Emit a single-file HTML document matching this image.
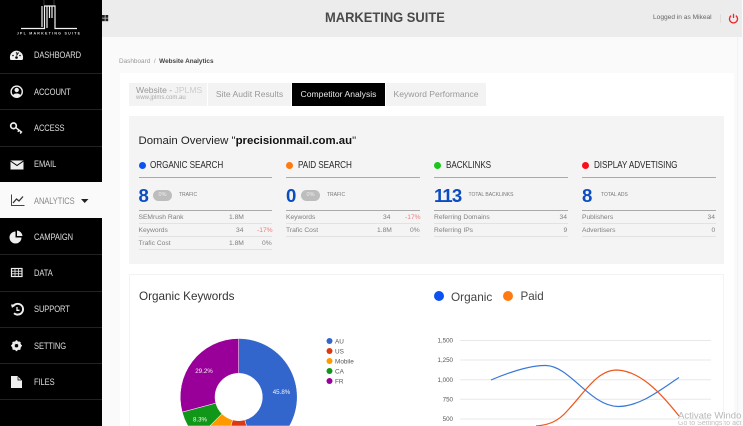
<!DOCTYPE html>
<html><head><meta charset="utf-8">
<style>
html,body{margin:0;padding:0;width:743px;height:426px;overflow:hidden;background:#fafafa;font-family:"Liberation Sans",sans-serif;}
#w{position:relative;width:743px;height:426px;overflow:hidden;}
.a{position:absolute;white-space:nowrap;}
#sb{position:absolute;left:0;top:0;width:101.5px;height:426px;background:#000;}
.sep{position:absolute;left:0;width:101.5px;height:1px;background:#222;}
.nav{position:absolute;left:33.5px;font-size:9.2px;line-height:12px;color:#dedede;letter-spacing:-.1px;transform:scaleX(.82);transform-origin:0 50%;white-space:nowrap;}
.h{font-size:10.2px;color:#2a2a2a;line-height:12px;letter-spacing:-.1px;transform:scaleX(.8);transform-origin:0 50%;}
.dot{position:absolute;width:7.4px;height:7.4px;border-radius:50%;}
.ln{position:absolute;height:1.6px;background:#aaa;}
.rl{position:absolute;height:1px;background:#e2e2e2;}
.big{position:absolute;font-weight:bold;font-size:18.6px;line-height:24px;color:#0b4cc0;}
.sm{position:absolute;font-size:5px;line-height:8px;color:#777;}
.t{position:absolute;font-size:6.7px;line-height:10px;color:#808080;}
.pill{position:absolute;width:19px;height:11px;border-radius:6px;background:#bdbdbd;color:#eee;font-size:5.5px;line-height:11px;text-align:center;}
.tab{position:absolute;top:83px;height:23px;background:#f3f3f3;color:#999;font-size:8.6px;line-height:23px;text-align:center;}
</style></head><body><div id="w">

<div class="a" style="left:101px;top:0;width:641px;height:37px;background:#ececec;"></div>
<div class="a" style="left:120px;top:73px;width:614px;height:353px;background:#fff;"></div>
<div class="a" style="left:737px;top:37px;width:1px;height:389px;background:#f2f2f2;"></div>

<svg class="a" style="left:102px;top:15px" width="7" height="7"><rect x="0" y="0" width="2.8" height="2.8" fill="#222"/><rect x="3.4" y="0" width="2.8" height="2.8" fill="#222"/><rect x="0" y="3.4" width="2.8" height="2.8" fill="#222"/><rect x="3.4" y="3.4" width="2.8" height="2.8" fill="#222"/></svg>
<div class="a" style="left:325px;top:9px;font-size:13.6px;font-weight:bold;line-height:18px;color:#4a4a4a;transform:scaleX(.95);transform-origin:0 50%;">MARKETING SUITE</div>
<div class="a" style="left:653px;top:13px;font-size:6.6px;line-height:10px;color:#666;">Logged in as Mikeal</div>
<div class="a" style="left:720px;top:14px;width:1px;height:9px;background:#ddd;"></div>
<svg class="a" style="left:727.5px;top:13px" width="11" height="11" viewBox="0 0 11 11"><path d="M3.2 2.6A4 4 0 1 0 7.8 2.6" fill="none" stroke="#f0242a" stroke-width="1.3"/><path d="M5.5 .8V5" stroke="#f0242a" stroke-width="1.3"/></svg>

<div class="a" style="left:119px;top:57px;font-size:6.4px;line-height:10px;color:#999;">Dashboard &nbsp;/&nbsp; <b style="color:#444">Website Analytics</b></div>

<div class="tab" style="left:129px;width:78px;"></div>
<div class="a" style="left:136px;top:85px;font-size:8.6px;line-height:11px;color:#999;">Website - <span style="color:#ccc">JPLMS</span></div>
<div class="a" style="left:136px;top:95px;font-size:6px;line-height:7px;color:#aaa;">www.jplms.com.au</div>
<div class="tab" style="left:208px;width:83px;">Site Audit Results</div>
<div class="tab" style="left:292px;width:93px;background:#000;color:#e8e8e8;">Competitor Analysis</div>
<div class="tab" style="left:386px;width:100px;">Keyword Performance</div>

<div class="a" style="left:129px;top:116px;width:595px;height:148px;background:#f4f4f4;"></div>
<div class="a" style="left:138.5px;top:134px;font-size:11.4px;line-height:15px;color:#222;">Domain Overview "<b style="color:#111">precisionmail.com.au</b>"</div>

<div class="dot" style="left:138.5px;top:161.5px;background:#0d52f0;"></div>
<div class="a h" style="left:150px;top:159.5px;">ORGANIC SEARCH</div>
<div class="ln" style="left:138.5px;top:176.5px;width:133.5px;"></div>
<div class="big" style="left:138.5px;top:183.5px;">8</div>
<div class="pill" style="left:153px;top:190px;">0%</div>
<div class="sm" style="left:179px;top:191px;">TRAFIC</div>
<div class="ln" style="left:138.5px;top:209.5px;width:133.5px;"></div>
<div class="t" style="left:138.5px;top:212.5px;">SEMrush Rank</div><div class="t" style="left:229px;top:212.5px;">1.8M</div>
<div class="rl" style="left:138.5px;top:223px;width:133.5px;"></div>
<div class="t" style="left:138.5px;top:225.5px;">Keywords</div><div class="t" style="left:236px;top:225.5px;">34</div><div class="t" style="left:257px;top:225.5px;color:#ee7a7a;">-17%</div>
<div class="rl" style="left:138.5px;top:236px;width:133.5px;"></div>
<div class="t" style="left:138.5px;top:238.5px;">Trafic Cost</div><div class="t" style="left:229px;top:238.5px;">1.8M</div><div class="t" style="left:262px;top:238.5px;">0%</div>
<div class="rl" style="left:138.5px;top:249px;width:133.5px;"></div>

<div class="dot" style="left:286px;top:161.5px;background:#ff7a10;"></div>
<div class="a h" style="left:297.5px;top:159.5px;">PAID SEARCH</div>
<div class="ln" style="left:286px;top:176.5px;width:134px;"></div>
<div class="big" style="left:286px;top:183.5px;">0</div>
<div class="pill" style="left:301px;top:190px;">0%</div>
<div class="sm" style="left:327px;top:191px;">TRAFIC</div>
<div class="ln" style="left:286px;top:209.5px;width:134px;"></div>
<div class="t" style="left:286px;top:212.5px;">Keywords</div><div class="t" style="left:383px;top:212.5px;">34</div><div class="t" style="left:405px;top:212.5px;color:#ee7a7a;">-17%</div>
<div class="rl" style="left:286px;top:223px;width:134px;"></div>
<div class="t" style="left:286px;top:225.5px;">Trafic Cost</div><div class="t" style="left:377px;top:225.5px;">1.8M</div><div class="t" style="left:410px;top:225.5px;">0%</div>
<div class="rl" style="left:286px;top:236px;width:134px;"></div>

<div class="dot" style="left:434px;top:161.5px;background:#1cc41c;"></div>
<div class="a h" style="left:445.5px;top:159.5px;">BACKLINKS</div>
<div class="ln" style="left:434px;top:176.5px;width:133.5px;"></div>
<div class="big" style="left:434px;top:183.5px;letter-spacing:-.9px;">113</div>
<div class="sm" style="left:468.5px;top:191px;">TOTAL BACKLINKS</div>
<div class="ln" style="left:434px;top:209.5px;width:133.5px;"></div>
<div class="t" style="left:434px;top:212.5px;">Referring Domains</div><div class="t" style="left:559.5px;top:212.5px;">34</div>
<div class="rl" style="left:434px;top:223px;width:133.5px;"></div>
<div class="t" style="left:434px;top:225.5px;">Referring IPs</div><div class="t" style="left:563.5px;top:225.5px;">9</div>
<div class="rl" style="left:434px;top:236px;width:133.5px;"></div>

<div class="dot" style="left:582px;top:161.5px;background:#fa0f18;"></div>
<div class="a h" style="left:593.5px;top:159.5px;">DISPLAY ADVETISING</div>
<div class="ln" style="left:582px;top:176.5px;width:133.5px;"></div>
<div class="big" style="left:582px;top:183.5px;">8</div>
<div class="sm" style="left:601px;top:191px;">TOTAL ADS</div>
<div class="ln" style="left:582px;top:209.5px;width:133.5px;"></div>
<div class="t" style="left:582px;top:212.5px;">Publishers</div><div class="t" style="left:707.5px;top:212.5px;">34</div>
<div class="rl" style="left:582px;top:223px;width:133.5px;"></div>
<div class="t" style="left:582px;top:225.5px;">Advertisers</div><div class="t" style="left:711.5px;top:225.5px;">0</div>
<div class="rl" style="left:582px;top:236px;width:133.5px;"></div>

<div class="a" style="left:129px;top:274px;width:595px;height:152px;border:1px solid #f3f3f3;border-bottom:0;box-sizing:border-box;"></div>
<div class="a" style="left:139px;top:288.5px;font-size:11.7px;line-height:16px;color:#333;">Organic Keywords</div>
<div class="dot" style="left:434px;top:290.5px;width:10px;height:10px;background:#0d52f0;"></div>
<div class="a" style="left:451px;top:288.5px;font-size:11.8px;line-height:16px;color:#444;">Organic</div>
<div class="dot" style="left:503px;top:290.5px;width:10px;height:10px;background:#ff7a10;"></div>
<div class="a" style="left:520.5px;top:288.5px;font-size:11.6px;line-height:16px;color:#444;">Paid</div>

<svg class="a" style="left:0;top:0" width="743" height="426" viewBox="0 0 743 426" font-family="Liberation Sans,sans-serif">
<path d="M238.7 338.5A58.5 58.5 0 0 1 289.5 426L246.5 426L244.8 419.9A23.7 23.7 0 0 0 238.7 373.3Z" fill="#3366cc" stroke="#fff" stroke-width=".5"/>
<path d="M246.5 426L230.9 426L232.6 419.9A23.7 23.7 0 0 0 244.8 419.9Z" fill="#dc3912" stroke="#fff" stroke-width=".5"/>
<path d="M230.9 426L209.7 426L221.9 413.8A23.7 23.7 0 0 0 232.6 419.9Z" fill="#ff9900" stroke="#fff" stroke-width=".5"/>
<path d="M209.7 426L187.9 426A58.5 58.5 0 0 1 182.2 412.1L215.8 403.1A23.7 23.7 0 0 0 221.9 413.8Z" fill="#109618" stroke="#fff" stroke-width=".5"/>
<path d="M182.2 412.1A58.5 58.5 0 0 1 238.7 338.5L238.7 373.3A23.7 23.7 0 0 0 215.8 403.1Z" fill="#990099" stroke="#fff" stroke-width=".5"/>
<g fill="#f4f4f4" font-size="6.2" text-anchor="middle"><text x="281.5" y="394">45.8%</text><text x="204" y="373">29.2%</text><text x="200" y="421.5">8.3%</text></g>
<circle cx="329.5" cy="341" r="3" fill="#3366cc"/><circle cx="329.5" cy="351" r="3" fill="#dc3912"/><circle cx="329.5" cy="361" r="3" fill="#ff9900"/><circle cx="329.5" cy="371" r="3" fill="#109618"/><circle cx="329.5" cy="381" r="3" fill="#990099"/>
<g fill="#555" font-size="6.4"><text x="335" y="343.3">AU</text><text x="335" y="353.3">US</text><text x="335" y="363.3">Mobile</text><text x="335" y="373.3">CA</text><text x="335" y="383.3">FR</text></g>
<g stroke="#e8e8e8" stroke-width="1"><path d="M460 340.5H711M460 360H711M460 379.7H711M460 399.3H711M460 419H711"/></g>
<g fill="#555" font-size="6.2" text-anchor="end"><text x="453" y="342.5">1,500</text><text x="453" y="362">1,250</text><text x="453" y="382">1,000</text><text x="453" y="401.5">750</text><text x="453" y="421">500</text></g>
<path d="M491 380C510 372 530 365 546 365.5C570 366 590 406 618 406.5C640 406.5 660 390 679 377.5" fill="none" stroke="#3a78d8" stroke-width="1.2"/>
<path d="M536 426C548 425 558 422 568 410C585 392 597 370 617 370C640 371 660 392 679 416" fill="none" stroke="#f0561e" stroke-width="1.2"/>
<text x="678" y="418.5" font-size="9.5" fill="#b8b8b8">Activate Windo</text>
</svg>
<div class="a" style="left:678px;top:421px;width:65px;height:5px;overflow:hidden;font-size:7px;line-height:5px;color:#c0c0c0;">Go to Settings to act</div>

<div id="sb"></div>
<div class="a" style="left:0;top:182px;width:102px;height:36px;background:#fafafa;"></div>
<div class="sep" style="top:73px"></div><div class="sep" style="top:109px"></div><div class="sep" style="top:146px"></div>
<div class="sep" style="top:254px"></div><div class="sep" style="top:291px"></div><div class="sep" style="top:327px"></div><div class="sep" style="top:363px"></div><div class="sep" style="top:399px"></div>

<svg class="a" style="left:0;top:0" width="102" height="400" viewBox="0 0 102 400">
<g fill="none" stroke="#f2f2f2" stroke-width="1.2">
<path d="M21 28.5H44.5V6H55V28.5H77"/>
<path d="M42 27V6M47 28V6M49.5 6V18M52 18V6"/>
</g>
<path d="M44 0V5M54 0V5" stroke="#333" stroke-width="1"/>
<text x="49" y="34.6" font-family="Liberation Sans,sans-serif" font-size="3.6" font-weight="bold" fill="#ddd" text-anchor="middle" letter-spacing="1.25">JPL MARKETING SUITE</text>
<!-- dashboard -->
<path d="M10.5 60A6.6 6.6 0 1 1 22.5 60Z" fill="#eee"/>
<path d="M16.5 55.5L18.5 52.5" stroke="#000" stroke-width="1.1"/><circle cx="13" cy="55.5" r=".8" fill="#000"/><circle cx="16.5" cy="53" r=".7" fill="#000"/><circle cx="20" cy="55.5" r=".8" fill="#000"/><circle cx="16.5" cy="57.5" r="1.3" fill="#000"/>
<!-- account -->
<circle cx="16.7" cy="91.7" r="5.6" fill="none" stroke="#eee" stroke-width="1.4"/><circle cx="16.7" cy="90" r="2.2" fill="#eee"/><path d="M12.8 95.6C13.5 92.8 20 92.8 20.6 95.6A5 5 0 0 1 12.8 95.6Z" fill="#eee"/>
<!-- access -->
<circle cx="13.5" cy="125.8" r="2.8" fill="none" stroke="#eee" stroke-width="1.7"/><path d="M16 127.8L22 132.5M19 130.2L17.8 131.8M21.4 132L20.2 133.6" stroke="#eee" stroke-width="1.5" fill="none"/>
<!-- email -->
<rect x="10.5" y="160.5" width="13" height="9" fill="#eee"/><path d="M10.5 161L17 165.5L23.5 161" fill="none" stroke="#000" stroke-width="1"/>
<!-- analytics -->
<path d="M11.5 194.5V205.5H24.5" fill="none" stroke="#444" stroke-width="1"/><path d="M13 203L16.5 199L19 201L23 196.5" fill="none" stroke="#333" stroke-width="1.3"/>
<path d="M81 199H88.5L84.7 203Z" fill="#222"/>
<!-- campaign -->
<path d="M15.5 231.5V237.5H21.5A6 6 0 1 1 15.5 231.5Z" fill="#eee"/><path d="M17 230.5A6 6 0 0 1 22.5 236H17Z" fill="#eee"/>
<!-- data -->
<rect x="11.5" y="268.5" width="10.5" height="8" fill="#000" stroke="#eee" stroke-width="1.2"/>
<path d="M11.5 271.2H22M11.5 273.8H22M15 268.5V276.5M18.5 268.5V276.5" stroke="#eee" stroke-width=".8"/>
<!-- support -->
<path d="M13 306.5A5.4 5.4 0 1 1 14 313.2" fill="none" stroke="#eee" stroke-width="1.9"/><path d="M11 304.5L15.5 304.5L12 308Z" fill="#eee"/><path d="M17 307V310.3H19.5" fill="none" stroke="#eee" stroke-width="1.3"/>
<!-- setting -->
<circle cx="16.5" cy="345.7" r="3.6" fill="none" stroke="#eee" stroke-width="2.2"/><path d="M16.5 340.3V351.1M11.1 345.7H21.9M12.7 341.9L20.3 349.5M20.3 341.9L12.7 349.5" stroke="#eee" stroke-width="1.6"/><circle cx="16.5" cy="345.7" r="1.7" fill="#000"/>
<!-- files -->
<path d="M11 376H17.5L22 380.5V388H11Z" fill="#eee"/><path d="M18 376.5V380H21.5" fill="none" stroke="#000" stroke-width=".7"/>
</svg>

<div class="nav" style="top:49px">DASHBOARD</div>
<div class="nav" style="top:86px">ACCOUNT</div>
<div class="nav" style="top:122px">ACCESS</div>
<div class="nav" style="top:158px">EMAIL</div>
<div class="nav" style="top:195px;color:#888">ANALYTICS</div>
<div class="nav" style="top:231px">CAMPAIGN</div>
<div class="nav" style="top:267px">DATA</div>
<div class="nav" style="top:303px">SUPPORT</div>
<div class="nav" style="top:340px">SETTING</div>
<div class="nav" style="top:376px">FILES</div>
</div></body></html>
